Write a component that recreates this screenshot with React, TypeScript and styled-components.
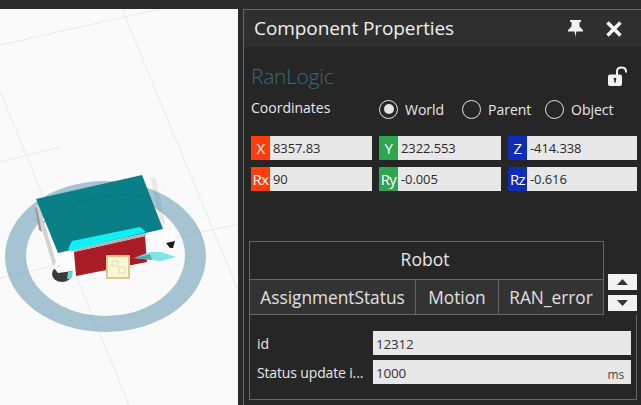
import React from "react";
import styled, { createGlobalStyle } from "styled-components";

const Global = createGlobalStyle`
  html, body { margin: 0; padding: 0; background: #2a2a2a; }
  body { width: 641px; height: 405px; overflow: hidden; font-family: "Open Sans", "Noto Sans", sans-serif; }
`;

const Page = styled.div`
  width: 641px; height: 405px; display: flex; flex-direction: column; background: #2a2a2a; overflow: hidden;
`;
const TopBar = styled.div`height: 9px; flex: none; background: #2a2a2a;`;
const Main = styled.div`flex: 1; display: flex; min-height: 0;`;
const Viewport = styled.div`width: 238px; flex: none; background: #fafafa; overflow: hidden;`;
const Scene = styled.svg`display: block;`;
const Panel = styled.div`
  margin-left: 5px; flex: 1; min-width: 0; display: flex; flex-direction: column;
  border-left: 1px solid #666; border-top: 1px solid #666; background: #262626;
`;
const Header = styled.div`
  height: 37px; flex: none; display: flex; align-items: center; background: #2f2f2f; padding: 0 19px 0 10px; box-sizing: border-box;
`;
const Title = styled.div`flex: 1; color: #f0f0f0; font-size: 19px; line-height: 37px; letter-spacing: -0.08px;`;
const HeaderIcons = styled.div`display: flex; align-items: center; gap: 23px;`;
const Body = styled.div`flex: 1; display: flex; flex-direction: column; padding: 0 4px 0 7px; min-height: 0;`;
const NameRow = styled.div`height: 46px; flex: none; display: flex; align-items: center; justify-content: space-between; padding: 12px 9px 0 0; box-sizing: border-box;`;
const Name = styled.div`color: #3a6880; font-size: 21px; font-weight: 300; letter-spacing: -0.3px;`;
const CoordRow = styled.div`height: 36px; flex: none; display: flex; align-items: center; margin-top: -2px;`;
const CoordLabel = styled.div`width: 128px; color: #e8e8e8; font-size: 14px; margin-top: -4px;`;
const Radios = styled.div`display: flex; align-items: center;`;
const Radio = styled.div<{ $w: number }>`
  width: ${(p) => p.$w}px; display: flex; align-items: center; gap: 7px; color: #e8e8e8; font-size: 14px;
`;
const Circle = styled.span<{ $on?: boolean }>`
  width: 19px; height: 19px; box-sizing: border-box; border: 1.5px solid #e4e4e4; border-radius: 50%;
  display: flex; align-items: center; justify-content: center; flex: none;
  &::after { content: ""; width: 10px; height: 10px; border-radius: 50%; background: ${(p) => (p.$on ? "#e4e4e4" : "transparent")}; }
`;
const Grid = styled.div`
  margin-top: 9px; flex: none; display: grid; grid-template-columns: 121px 122px 129px; column-gap: 7px; row-gap: 7px;
`;
const Cell = styled.div`height: 24px; display: flex; background: #e8e8e8; overflow: hidden;`;
const Axis = styled.div<{ $c: string }>`
  width: 19px; flex: none; background: ${(p) => p.$c}; color: #fff; font-size: 15px; text-align: center; line-height: 24px; letter-spacing: -0.6px;
`;
const CellValue = styled.div`padding-left: 3px; color: #2a2a2a; font-size: 13px; line-height: 24px; letter-spacing: -0.1px;`;
const TabsArea = styled.div`margin-top: 50px; flex: none; width: 388px; margin-left: -2px;`;
const TabTop = styled.div`display: flex; align-items: flex-end;`;
const TabStack = styled.div`width: 355px; flex: none;`;
const GroupTab = styled.div`
  height: 38px; box-sizing: border-box; border: 1px solid #666; border-bottom: none; color: #e8e8e8; font-size: 17.5px;
  padding: 0 3px 3px 0; display: flex; align-items: center; justify-content: center;
`;
const TabRow = styled.div`display: flex; height: 36px;`;
const Tab = styled.div<{ $w: number }>`
  width: ${(p) => p.$w}px; box-sizing: border-box; flex: none; background: #333; border: 1px solid #666; border-right-width: 0;
  color: #e0e0e0; font-size: 17.3px; display: flex; align-items: center; justify-content: center; white-space: nowrap;
  &:last-child { border-right-width: 1px; }
`;
const Spin = styled.div`margin-left: 4px; margin-bottom: 4px; display: flex; flex-direction: column; gap: 5px;`;
const SpinBtn = styled.div`
  width: 29px; height: 16px; background: #f2f2f2; display: flex; align-items: center; justify-content: center;
`;
const Content = styled.div`
  height: 85px; box-sizing: border-box; border: 1px solid #666; border-top: none; padding: 16px 5px 0 7px; display: flex; flex-direction: column; gap: 5px;
`;
const PropRow = styled.div`display: flex; align-items: center; height: 24px;`;
const PropLabel = styled.div`width: 116px; flex: none; color: #e8e8e8; font-size: 14px; white-space: nowrap; letter-spacing: -0.15px;`;
const PropField = styled.div`
  flex: 1; height: 24px; background: #e8e8e8; display: flex; align-items: center; justify-content: space-between;
  padding: 2px 7px 0 3px; box-sizing: border-box; color: #333; font-size: 13.5px; letter-spacing: -0.2px;
`;
const Unit = styled.span`font-size: 12px; color: #444; padding-top: 2px;`;

function SceneArt() {
  return (
    <Scene width="238" height="396" viewBox="0 9 238 396">
      <g stroke="#e9e9e9" strokeWidth="1" fill="none">
        <path d="M0 45 L160 9" />
        <path d="M122 9 L238 290" />
        <path d="M0 278 L238 224" />
        <path d="M0 91 L129 405" />
        <path d="M0 162 L60 147" />
      </g>
      <path d="M35 208 L43 198 L150 176 L158 177 L175 228 L175 243 L150 262 L76 278 L60 274 L53 268 Z" fill="#fcfcfc" />
      <path d="M150 177 L156 178 L165 224 L160 222 Z" fill="#ece6e4" />
      <path fillRule="evenodd" fill="#4f8ca8" fillOpacity="0.5" d="M5 256.5a100.5 75.5 0 1 0 201 0a100.5 75.5 0 1 0 -201 0Z M26 255.5a79.5 60.5 0 1 1 159 0a79.5 60.5 0 1 1 -159 0Z" />
      <path d="M35 206 L39 205 L56 262 L53 266 Z" fill="#d2d2d4" />
      <path d="M35 208 L37 207 L42 232 L39 230 Z" fill="#9a9a9e" />
      <ellipse cx="62" cy="274" rx="10" ry="8" fill="#3a3a3a" />
      <path d="M54 268 L72 262 L73 271 L58 273 Z" fill="#fcfcfc" />
      <path d="M68 272 L73 271 L71 279 L67 279 Z" fill="#63d4d8" />
      <path d="M166 243 L175 241 L173 248 L170 248 Z" fill="#1c1c1c" />
      <path d="M74 252 L145 236 L147 262 L76 276 Z" fill="#a81c26" />
      <path d="M36 199 L142 175 L163 229 L58 253 Z" fill="#0b7f88" />
      <path d="M44 222 C 70 200, 110 190, 150 197" stroke="#0a7580" strokeWidth="1" fill="none" />
      <path d="M68 249 L72 241 L140 227 L146 232 L74 250 L72 251 Z" fill="#10f0f4" />
      <path d="M73 250 L146 233 L146 236 L74 252 Z" fill="#b0b4b6" />
      <path d="M134 258 L150 252 L161 252 L176 257 L160 261 L152 260 Z" fill="#7fe6e8" />
      <path d="M134 258 L150 254 L152 260 Z" fill="#5fa8a8" />
      <rect x="107" y="256" width="22" height="22" fill="#fdf7d6" stroke="#e0c690" strokeWidth="2" />
      <rect x="112" y="261" width="6" height="5" fill="none" stroke="#dfd9bc" strokeWidth="1" />
      <rect x="119" y="267" width="6" height="6" fill="none" stroke="#dfd9bc" strokeWidth="1" />
    </Scene>
  );
}

const PinIcon = () => (
  <svg width="15" height="17" viewBox="0 0 15 17">
    <path fill="#f2f2f2" d="M2 0H13V2H11.5V6.5L15 10V11.5H8.4L7.5 17L6.6 11.5H0V10L3.5 6.5V2H2Z" />
  </svg>
);
const CloseIcon = () => (
  <svg width="16" height="16" viewBox="0 0 16 16">
    <path stroke="#f4f4f4" strokeWidth="3.6" d="M1.5 1.5L14.5 14.5M14.5 1.5L1.5 14.5" />
  </svg>
);
const LockIcon = () => (
  <svg width="20" height="21" viewBox="0 0 20 21">
    <path d="M9 9V5.5C9 3 11 1.5 13.5 1.5C16 1.5 18 3 18 5.5V6.5" fill="none" stroke="#f2f2f2" strokeWidth="2" />
    <rect x="0" y="8.5" width="14" height="11.5" rx="2" fill="#f2f2f2" />
    <rect x="6.2" y="12.5" width="1.6" height="4" fill="#262626" />
    <circle cx="7" cy="13" r="1.3" fill="#262626" />
  </svg>
);
const Tri = ({ up }: { up?: boolean }) => (
  <svg width="11" height="6" viewBox="0 0 11 6">
    <path d={up ? "M0 6L5.5 0L11 6Z" : "M0 0L5.5 6L11 0Z"} fill="#333" />
  </svg>
);

const coords = [
  { a: "X", c: "#ff3d0c", v: "8357.83" },
  { a: "Y", c: "#2da64f", v: "2322.553" },
  { a: "Z", c: "#0e2cb6", v: "-414.338" },
  { a: "Rx", c: "#ff3d0c", v: "90" },
  { a: "Ry", c: "#2da64f", v: "-0.005" },
  { a: "Rz", c: "#0e2cb6", v: "-0.616" },
];

export default function App() {
  return (
    <Page>
      <Global />
      <TopBar />
      <Main>
        <Viewport><SceneArt /></Viewport>
        <Panel>
          <Header>
            <Title>Component Properties</Title>
            <HeaderIcons><PinIcon /><CloseIcon /></HeaderIcons>
          </Header>
          <Body>
            <NameRow><Name>RanLogic</Name><LockIcon /></NameRow>
            <CoordRow>
              <CoordLabel>Coordinates</CoordLabel>
              <Radios>
                <Radio $w={83}><Circle $on />World</Radio>
                <Radio $w={83}><Circle />Parent</Radio>
                <Radio $w={80}><Circle />Object</Radio>
              </Radios>
            </CoordRow>
            <Grid>
              {coords.map((c) => (
                <Cell key={c.a}><Axis $c={c.c}>{c.a}</Axis><CellValue>{c.v}</CellValue></Cell>
              ))}
            </Grid>
            <TabsArea>
              <TabTop>
                <TabStack>
                  <GroupTab>Robot</GroupTab>
                  <TabRow>
                    <Tab $w={166}>AssignmentStatus</Tab>
                    <Tab $w={83}>Motion</Tab>
                    <Tab $w={106}>RAN_error</Tab>
                  </TabRow>
                </TabStack>
                <Spin>
                  <SpinBtn><Tri up /></SpinBtn>
                  <SpinBtn><Tri /></SpinBtn>
                </Spin>
              </TabTop>
              <Content>
                <PropRow><PropLabel>id</PropLabel><PropField>12312</PropField></PropRow>
                <PropRow><PropLabel>Status update i...</PropLabel><PropField>1000<Unit>ms</Unit></PropField></PropRow>
              </Content>
            </TabsArea>
          </Body>
        </Panel>
      </Main>
    </Page>
  );
}
